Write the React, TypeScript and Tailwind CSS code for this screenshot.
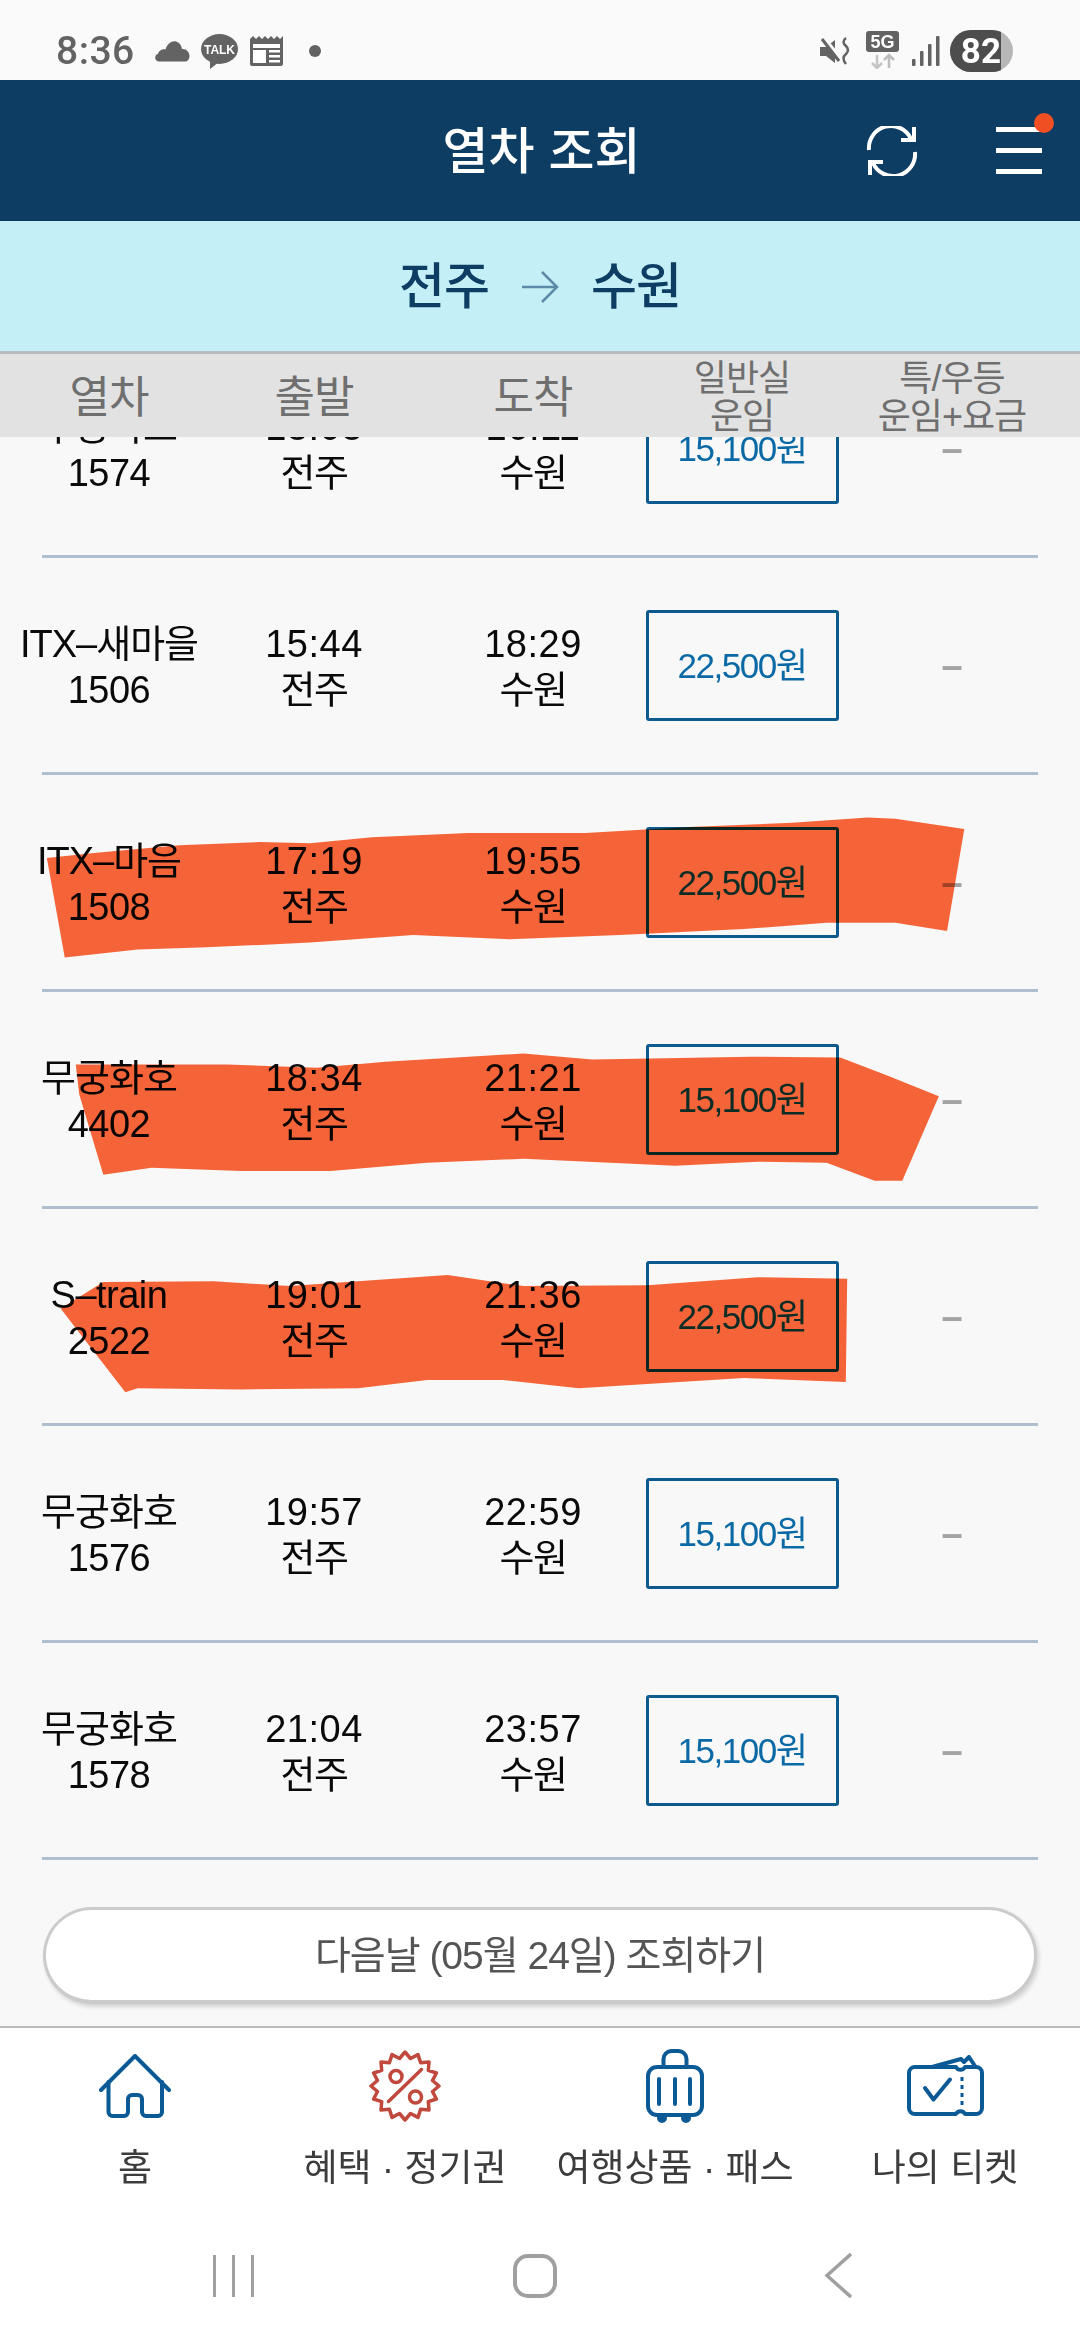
const FONT = "font-['Liberation_Sans','Noto_Sans_CJK_KR',sans-serif]";

type Row = { name: string; nameLatin: boolean; no: string; dep: string; arr: string; price: string };
const rows: Row[] = [
  { name: "무궁화호", nameLatin: false, no: "1574", dep: "13:03", arr: "16:11", price: "15,100원" },
  { name: "ITX–새마을", nameLatin: false, no: "1506", dep: "15:44", arr: "18:29", price: "22,500원" },
  { name: "ITX–마음", nameLatin: false, no: "1508", dep: "17:19", arr: "19:55", price: "22,500원" },
  { name: "무궁화호", nameLatin: false, no: "4402", dep: "18:34", arr: "21:21", price: "15,100원" },
  { name: "S–train", nameLatin: true, no: "2522", dep: "19:01", arr: "21:36", price: "22,500원" },
  { name: "무궁화호", nameLatin: false, no: "1576", dep: "19:57", arr: "22:59", price: "15,100원" },
  { name: "무궁화호", nameLatin: false, no: "1578", dep: "21:04", arr: "23:57", price: "15,100원" },
];

const COLS = "grid grid-cols-[218px_192px_246px_172px_248px] items-center justify-items-center";

function starPoints() {
  const pts: string[] = [];
  const n = 16;
  for (let i = 0; i < n * 2; i++) {
    const r = i % 2 === 0 ? 34 : 28;
    const a = (Math.PI * i) / n - Math.PI / 2;
    pts.push(`${(36 + r * Math.cos(a)).toFixed(1)},${(36 + r * Math.sin(a)).toFixed(1)}`);
  }
  return pts.join(" ");
}

function StatusBar() {
  return (
    <div className="h-[80px] bg-[#fbfafa] flex items-center justify-between pl-[56px] pr-[67px] pt-[22px] shrink-0">
      <div className="flex items-center">
        <span className="font-['Roboto',sans-serif] font-medium text-[39px] leading-none tracking-[0.5px] text-[#636363] w-[99px]">8:36</span>
        <svg width="35" height="21" viewBox="0 0 35 21" className="mr-[11px]">
          <path d="M4 20.5a4 4 0 0 1-1-7.8C4 9 8 7.5 10.500 8.500 12 3 17-.5 21 .5c3.500 1 5.500 4 6 7.500 4-.5 7.500 3 7.500 7 0 3-2 5.500-4 5.500z" fill="#636363" />
        </svg>
        <svg width="37" height="35" viewBox="0 0 37 35" className="mr-[12px]">
          <ellipse cx="18.500" cy="15" rx="18.500" ry="15" fill="#636363" />
          <path d="M9 26 L9 35 L18 28z" fill="#636363" />
          <text x="18.500" y="20" textAnchor="middle" fontSize="12" fontWeight="700" fill="#fff" fontFamily="Liberation Sans">TALK</text>
        </svg>
        <svg width="33" height="30" viewBox="0 0 33 30" className="mr-[26px]">
          <path d="M0 3 L3 0 L6 3 L9 0 L12 3 L15 0 L18 3 L21 0 L24 3 L27 0 L30 3 L33 0 V28 a2 2 0 0 1-2 2 H2 a2 2 0 0 1-2-2z" fill="#636363" />
          <rect x="3" y="8" width="27" height="4" fill="#fff" />
          <rect x="3" y="14" width="13" height="13" fill="#fff" />
          <rect x="19" y="14" width="11" height="2.500" fill="#fff" />
          <rect x="19" y="19" width="11" height="2.500" fill="#fff" />
          <rect x="19" y="24" width="11" height="2.500" fill="#fff" />
        </svg>
        <span className="w-[12px] h-[12px] rounded-full bg-[#636363]" />
      </div>
      <div className="flex items-center">
        <svg width="31" height="29" viewBox="0 0 31 29" className="mr-[15px]">
          <path d="M0 10 H6 L15 3 V26 L6 19 H0z" fill="#636363" />
          <path d="M2 0 L19 20" stroke="#fbfafa" strokeWidth="5" />
          <path d="M2 2 L19 24" stroke="#636363" strokeWidth="3" />
          <path d="M26 1 Q21 5 26 9 Q30 13 26 17 Q21 21 26 27" stroke="#636363" strokeWidth="2.500" fill="none" />
        </svg>
        <svg width="33" height="38" viewBox="0 0 33 38" className="mr-[13px] mb-[2px]">
          <rect x="0" y="0" width="33" height="21" rx="3" fill="#636363" />
          <text x="16.500" y="17" textAnchor="middle" fontSize="18" fontWeight="700" fill="#fff" fontFamily="Liberation Sans">5G</text>
          <path d="M11 24 V37 M6 32 L11 37 L16 32" stroke="#c4c4c4" strokeWidth="2.500" fill="none" />
          <path d="M23 37 V24 M18 29 L23 24 L28 29" stroke="#bdbdbd" strokeWidth="2.500" fill="none" />
        </svg>
        <svg width="28" height="30" viewBox="0 0 28 30" className="mr-[10px]">
          <rect x="0" y="23" width="3.500" height="7" rx="1" fill="#636363" />
          <rect x="8" y="15" width="3.500" height="15" rx="1" fill="#636363" />
          <rect x="16" y="8" width="3.500" height="22" rx="1" fill="#636363" />
          <rect x="24" y="0" width="3.500" height="30" rx="1" fill="#636363" />
        </svg>
        <div className="w-[63px] h-[42px] rounded-full overflow-hidden bg-[#b7b7b7] flex">
          <div className="w-[51px] h-full bg-[#4d4d4d] flex items-center justify-end">
            <span className="font-['Roboto',sans-serif] font-bold text-[35px] leading-none text-white">82</span>
          </div>
        </div>
      </div>
    </div>
  );
}

function Header() {
  return (
    <div className="h-[141px] bg-[#0d3d63] grid grid-cols-[1fr_auto_1fr] items-center shrink-0">
      <div />
      <h1 className={`${FONT} text-[50px] font-medium leading-none text-white pl-[3px] pt-[3px]`}>열차 조회</h1>
      <div className="flex items-center justify-end pr-[38px] gap-[78px]">
        <svg width="52" height="50" viewBox="0 0 52 50" fill="none" stroke="#fff" strokeWidth="4">
          <path d="M3 24 A22 22 0 0 1 45 13" />
          <path d="M48 1 V14 H35" />
          <path d="M49 26 A22 22 0 0 1 7 37" />
          <path d="M4 49 V36 H17" />
        </svg>
        <div className="relative w-[46px] h-[49px] flex flex-col justify-between py-[1px]">
          <div className="h-[5px] bg-white" />
          <div className="h-[5px] bg-white" />
          <div className="h-[5px] bg-white" />
          <span className="absolute right-[-12px] top-[-13px] w-[20px] h-[20px] rounded-full bg-[#f04e23]" />
        </div>
      </div>
    </div>
  );
}

function Route() {
  return (
    <div className={`${FONT} h-[130px] pt-[2px] bg-[#c5eff6] flex items-center justify-center text-[#0d3d63] text-[50px] font-medium leading-none tracking-[-1px] shrink-0`}>
      <span>전주</span>
      <svg width="38" height="32" viewBox="0 0 38 32" className="mx-[32px]" fill="none" stroke="#5d8aa8" strokeWidth="2.500">
        <path d="M1 16 H36 M21 1 L36 16 L21 31" />
      </svg>
      <span>수원</span>
    </div>
  );
}

function TableHead() {
  return (
    <div className={`${FONT} ${COLS} h-[86px] pt-[4px] bg-[#e2e2e2] border-t-[3px] border-[#b9bcbf] text-[#6f6f6f] text-center shrink-0 relative z-10`}>
      <span className="text-[44px] leading-none tracking-[-1px]">열차</span>
      <span className="text-[44px] leading-none tracking-[-1px]">출발</span>
      <span className="text-[44px] leading-none tracking-[-1px]">도착</span>
      <span className="text-[36px] leading-[38px] tracking-[-1px]">일반실<br />운임</span>
      <span className="text-[36px] leading-[38px] tracking-[-1px] whitespace-nowrap">특/우등<br />운임+요금</span>
    </div>
  );
}

function TrainRow({ r }: { r: Row }) {
  return (
    <div className="shrink-0">
      <div className={`${COLS} pt-[52px] pb-[51px] text-[#0a0a0a] text-center`}>
        <div className="pt-[3px] text-[38px] leading-[46px] whitespace-nowrap">
          <div className={r.nameLatin ? "tracking-[-0.5px]" : "tracking-[-1px]"}>{r.name}</div>
          <div className="tracking-[-0.5px]">{r.no}</div>
        </div>
        <div className="pt-[3px] text-[38px] leading-[46px]">
          <div className="tracking-[0.5px]">{r.dep}</div>
          <div className="tracking-[-1.500px]">전주</div>
        </div>
        <div className="pt-[3px] text-[38px] leading-[46px]">
          <div className="tracking-[0.5px]">{r.arr}</div>
          <div className="tracking-[-1.500px]">수원</div>
        </div>
        <div className="w-[193px] h-[111px] shrink-0 border-[3px] border-[#0c5a8e] rounded-[3px] flex items-center justify-center text-[#0b6aa5] text-[35px] leading-none tracking-[-1.500px]">
          {r.price}
        </div>
        <div className="text-[38px] font-bold leading-none text-[#a3a3a3]">–</div>
      </div>
      <div className="mx-[42px] h-[3px] bg-[#b0bfcf]" />
    </div>
  );
}

function Strokes() {
  return (
    <svg
      width="1080"
      height="640"
      viewBox="0 0 1568 1568"
      preserveAspectRatio="none"
      className="absolute left-0 top-[343px] mix-blend-multiply pointer-events-none"
    >
      <path
        fill="#fb6739"
        d="M68 191 L140 178 L260 160 L378 152 L450 155 L540 140 L680 130 L850 130 L1000 115 L1150 105 L1260 92 L1300 95 L1400 120 L1375 370 L1300 350 L1200 350 L1080 365 L900 380 L740 390 L600 380 L450 398 L378 404 L300 410 L200 415 L94 435Z"
      />
      <path
        fill="#fb6739"
        d="M110 697 L330 697 L460 705 L560 690 L760 670 L860 685 L1090 678 L1220 680 L1290 725 L1363 775 L1310 982 L1270 982 L1200 938 L1100 935 L980 945 L760 928 L620 938 L480 958 L350 958 L220 950 L150 967 L115 770Z"
      />
      <path
        fill="#fb6739"
        d="M88 1295 L150 1230 L310 1228 L420 1240 L650 1213 L760 1240 L940 1238 L1100 1218 L1230 1222 L1228 1475 L1080 1465 L840 1490 L730 1470 L620 1470 L520 1490 L350 1493 L200 1490 L182 1500Z"
      />
    </svg>
  );
}

function List() {
  return (
    <div className={`${FONT} relative flex-1 min-h-0 overflow-hidden bg-[#f8f8f8]`}>
      <div className="mt-[-96px] flex flex-col">
        {rows.map((r) => (
          <TrainRow key={r.no} r={r} />
        ))}
        <div className="mx-[43px] mt-[47px] h-[97px] rounded-full bg-white border-[3px] border-[#cbcbcb] border-b-[4px] shadow-[2px_3px_4px_rgba(0,0,0,0.15)] flex items-center justify-center text-[39px] leading-none tracking-[-1px] text-[#555]">
          다음날 (05월 24일) 조회하기
        </div>
      </div>
      <Strokes />
    </div>
  );
}

function Tab({ label, children }: { label: string; children: React.ReactNode }) {
  return (
    <div className="flex flex-col items-center">
      <div className="h-[76px] flex items-center justify-center">{children}</div>
      <div className="mt-[25px] text-[37px] leading-[40px] text-[#3c3c3c] whitespace-nowrap">{label}</div>
    </div>
  );
}

function BottomNav() {
  return (
    <div className={`${FONT} h-[314px] bg-white border-t-[2px] border-[#b9bcbf] shrink-0 flex flex-col`}>
      <div className="grid grid-cols-4 pt-[20px]">
        <Tab label="홈">
          <svg width="72" height="65" viewBox="0 0 72 65" fill="none" stroke="#0b5a96" strokeWidth="4" strokeLinecap="round" strokeLinejoin="round">
            <path d="M2 36 L36 2 L70 36" />
            <path d="M9.500 28 V58 a4 4 0 0 0 4 4 H25 a4 4 0 0 0 4-4 V45 a4 4 0 0 1 4-4 h6 a4 4 0 0 1 4 4 V58 a4 4 0 0 0 4 4 H59 a4 4 0 0 0 4-4 V28" />
          </svg>
        </Tab>
        <Tab label="혜택 · 정기권">
          <svg width="72" height="72" viewBox="0 0 72 72" fill="none" stroke="#c0483c" strokeWidth="3.500" strokeLinecap="round" strokeLinejoin="round">
            <polygon points={starPoints()} />
            <path d="M19.500 51.500 L52.500 19.500" />
            <circle cx="27" cy="26.500" r="6" />
            <circle cx="46.500" cy="47" r="6" />
          </svg>
        </Tab>
        <Tab label="여행상품 · 패스">
          <svg width="58" height="74" viewBox="0 0 58 74" fill="none" stroke="#0b5a96" strokeWidth="4" strokeLinecap="round">
            <rect x="2" y="18" width="54" height="48" rx="9" />
            <path d="M17.500 18 V10 a8 8 0 0 1 8-8 h7 a8 8 0 0 1 8 8 v8" />
            <path d="M13 30 V55 M29 30 V55 M44 30 V55" />
            <circle cx="16" cy="69" r="3" fill="#0b5a96" />
            <circle cx="40" cy="69" r="3" fill="#0b5a96" />
          </svg>
        </Tab>
        <Tab label="나의 티켓">
          <svg width="78" height="62" viewBox="0 0 78 62" fill="none" stroke="#0b5a96" strokeWidth="4" strokeLinejoin="round" strokeLinecap="round">
            <path d="M9 12 H50 a5 5 0 0 0 9 0 H70 a6 6 0 0 1 6 6 V53 a6 6 0 0 1-6 6 H59 a5 5 0 0 0-9 0 H9 a6 6 0 0 1-6-6 V18 a6 6 0 0 1 6-6z" />
            <path d="M26 12 L55 4 L58 7 L63 2 L69 11" />
            <path d="M19 33 L27.500 44.500 L44 24.500" />
            <path d="M56 22 V50" strokeDasharray="4 4" strokeWidth="3" strokeLinecap="butt" />
          </svg>
        </Tab>
      </div>
      <div className="mt-[64px] pl-[213px] flex items-center">
        <div className="w-[41px] h-[42px] flex justify-between">
          <span className="w-[3px] h-full bg-[#a0a0a0]" />
          <span className="w-[3px] h-full bg-[#a0a0a0]" />
          <span className="w-[3px] h-full bg-[#a0a0a0]" />
        </div>
        <div className="ml-[259px] w-[44px] h-[44px] rounded-[15px] border-[4px] border-[#a0a0a0]" />
        <svg width="28" height="45" viewBox="0 0 28 45" fill="none" stroke="#a0a0a0" strokeWidth="3.500" className="ml-[267px]">
          <path d="M27 1 L3 22.500 L27 44" />
        </svg>
      </div>
    </div>
  );
}

export default function App() {
  return (
    <div className="w-[1080px] h-[2340px] flex flex-col overflow-hidden bg-white">
      <StatusBar />
      <Header />
      <Route />
      <TableHead />
      <List />
      <BottomNav />
    </div>
  );
}
